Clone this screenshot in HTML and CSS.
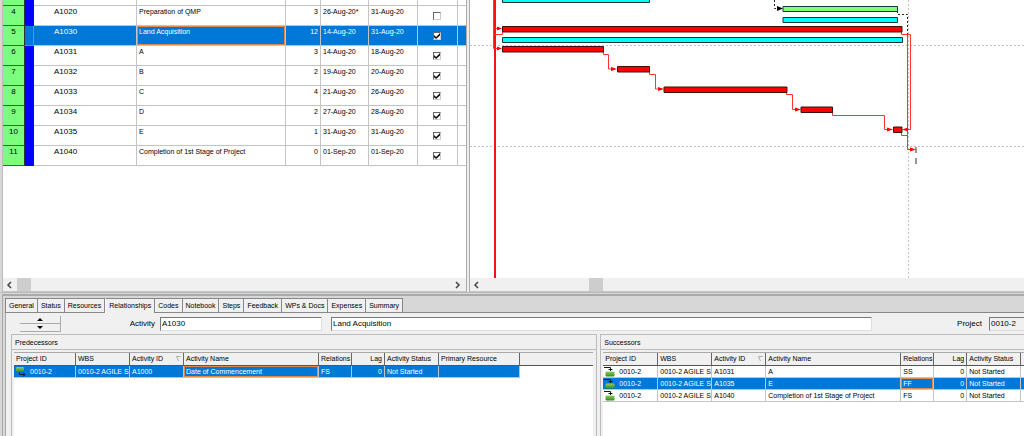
FILE: index.html
```html
<!DOCTYPE html>
<html lang="en">
<head>
<meta charset="utf-8">
<title>Activities</title>
<link rel="stylesheet" href="styles.css">
</head>
<body>
<svg width="0" height="0" class="defs" aria-hidden="true">
  <defs>
    <linearGradient id="leaf" x1="0" y1="0" x2="0" y2="1"><stop offset="0" stop-color="#8fd060"/><stop offset="1" stop-color="#2f8a1c"/></linearGradient>
    <symbol id="pred" viewBox="0 0 11 10"><rect x="1" y="0" width="8" height="5" rx="1" fill="url(#leaf)"/><path d="M4.500 5v2.500h5M8 5.500l2 2-2 2" fill="none" stroke="#061a10"/></symbol>
    <symbol id="succ" viewBox="0 0 11 10"><rect x="1.500" y="4.500" width="9" height="5" rx="1" fill="url(#leaf)"/><path d="M0 .5h6.500V4M4.500 2.500h4" fill="none" stroke="#0c1c10"/></symbol>
    <symbol id="sort" viewBox="0 0 5 6"><path d="M4.500.5h-4l2 4.500" fill="none" stroke="#aaa"/></symbol>
    <symbol id="prev" viewBox="0 0 6 8"><path d="M5 1 2 4l3 3" fill="none" stroke="#444" stroke-width="1.500"/></symbol>
    <symbol id="next" viewBox="0 0 6 8"><path d="M1 1l3 3-3 3" fill="none" stroke="#444" stroke-width="1.500"/></symbol>
  </defs>
</svg>
<div class="app">
  <main class="top">
    <section class="grid-pane">
      <div class="grid-body">
        <table class="activities">
          <colgroup><col class="c-num"><col class="c-band"><col class="c-id"><col class="c-name"><col class="c-dur"><col class="c-start"><col class="c-finish"><col class="c-check"><col></colgroup>
          <tbody>
            <tr class="cut"><th></th><td class="band"></td><td></td><td></td><td></td><td></td><td></td><td></td><td></td></tr>
            <tr><th>4</th><td class="band"></td><td class="id">A1020</td><td>Preparation of QMP</td><td class="num">3</td><td>26-Aug-20*</td><td>31-Aug-20</td><td class="check"><input type="checkbox" aria-label="A1020"></td><td></td></tr>
            <tr class="selected"><th>5</th><td class="band"></td><td class="id">A1030</td><td class="focus">Land Acquisition</td><td class="num">12</td><td>14-Aug-20</td><td>31-Aug-20</td><td class="check"><input type="checkbox" aria-label="A1030" checked></td><td></td></tr>
            <tr><th>6</th><td class="band"></td><td class="id">A1031</td><td>A</td><td class="num">3</td><td>14-Aug-20</td><td>18-Aug-20</td><td class="check"><input type="checkbox" aria-label="A1031" checked></td><td></td></tr>
            <tr><th>7</th><td class="band"></td><td class="id">A1032</td><td>B</td><td class="num">2</td><td>19-Aug-20</td><td>20-Aug-20</td><td class="check"><input type="checkbox" aria-label="A1032" checked></td><td></td></tr>
            <tr><th>8</th><td class="band"></td><td class="id">A1033</td><td>C</td><td class="num">4</td><td>21-Aug-20</td><td>26-Aug-20</td><td class="check"><input type="checkbox" aria-label="A1033" checked></td><td></td></tr>
            <tr><th>9</th><td class="band"></td><td class="id">A1034</td><td>D</td><td class="num">2</td><td>27-Aug-20</td><td>28-Aug-20</td><td class="check"><input type="checkbox" aria-label="A1034" checked></td><td></td></tr>
            <tr><th>10</th><td class="band"></td><td class="id">A1035</td><td>E</td><td class="num">1</td><td>31-Aug-20</td><td>31-Aug-20</td><td class="check"><input type="checkbox" aria-label="A1035" checked></td><td></td></tr>
            <tr><th>11</th><td class="band"></td><td class="id">A1040</td><td>Completion of 1st Stage of Project</td><td class="num">0</td><td>01-Sep-20</td><td>01-Sep-20</td><td class="check"><input type="checkbox" aria-label="A1040" checked></td><td></td></tr>
          </tbody>
        </table>
      </div>
      <div class="scroll">
        <button class="arrow" aria-label="Scroll left"><svg width="6" height="8"><use href="#prev"/></svg></button>
        <span class="thumb"></span>
        <button class="arrow end" aria-label="Scroll right"><svg width="6" height="8"><use href="#next"/></svg></button>
      </div>
    </section>
    <div class="splitter"></div>
    <section class="gantt-pane">
      <svg class="gantt" role="img" aria-label="Gantt chart">
        <g transform="translate(-470 0)" fill="none">
          <g stroke="#c4c4c4" stroke-dasharray="2 2"><path d="M470 45.500H3000M470 146.500H3000M908.500 0V400"/></g>
          <path d="M495 0V400" stroke="#ff1010" stroke-width="2"/>
          <g stroke="#222" stroke-dasharray="2 2"><path d="M774.500 0V8.500H778M897.500 11V14.500H907.500V34"/></g>
          <path d="M777 6l6 2.500-6 2.500z" fill="#000"/>
          <g stroke="#ff3434">
            <path d="M493.500 0V48.500H499M495 28.500H499M502.500 32V34.500H495"/>
            <path d="M603.500 52V54.500H608.500V69H613M649.500 72V74.500H655.500V89H660M786.500 92V94.500H792.500V109.500H797M832.500 112V115.500H884.500V129.500H889"/>
            <path d="M901.500 32V34.500H910.500V129.500H906M901.500 132V135.500H907.500M907.500 34V149.500H912"/>
          </g>
          <path fill="#f00" d="M497 26.500l5 2-5 2zM497 46.500l5 2-5 2zM611 67l6 2-6 2zM658 87l6 2-6 2zM795 107.500l6 2-6 2zM887 127.500l6 2-6 2zM908 127.500l-6 2 6 2zM910 147.500l6 2-6 2z"/>
          <g stroke="#183838">
            <g fill="#0ff"><path d="M502.500-2.500H649.500V2.500H502.500zM502.500 37.500H902.500V42.500H502.500zM783 17.500H897.500V22.500H783z"/></g>
            <path fill="#7cff7c" d="M783 6.500H897.500V11.500H783z"/>
          </g>
          <path stroke="#401010" fill="#f00" d="M502.500 26.500H902V32H502.500zM502.500 46.500H603.500V52H502.500zM617.500 66.500H649.500V72H617.500zM664 87H787V92.500H664zM801 107H832.500V112.500H801zM893.500 127H902V132.500H893.500z"/>
          <path d="M916 147v6M916 158v6" stroke="#777" stroke-width="1.500"/>
        </g>
      </svg>
      <div class="scroll">
        <button class="arrow" aria-label="Scroll left"><svg width="6" height="8"><use href="#prev"/></svg></button>
        <span class="thumb far"></span>
      </div>
    </section>
  </main>
  <section class="details">
    <nav class="tabs" role="tablist">
      <button class="tab" role="tab">General</button><button class="tab" role="tab">Status</button><button class="tab" role="tab">Resources</button><button class="tab active" role="tab" aria-selected="true">Relationships</button><button class="tab" role="tab">Codes</button><button class="tab" role="tab">Notebook</button><button class="tab" role="tab">Steps</button><button class="tab" role="tab">Feedback</button><button class="tab" role="tab">WPs &amp; Docs</button><button class="tab" role="tab">Expenses</button><button class="tab" role="tab">Summary</button>
    </nav>
    <form class="fields">
      <div class="stepper">
        <button type="button" aria-label="Previous activity"><svg width="6" height="3"><path d="M0 3l3-3 3 3z"/></svg></button>
        <button type="button" aria-label="Next activity"><svg width="6" height="3"><path d="M0 0l3 3 3-3z"/></svg></button>
      </div>
      <label class="l-activity" for="act">Activity</label>
      <input id="act" class="f-id" type="text" value="A1030">
      <input class="f-name" type="text" aria-label="Activity name" value="Land Acquisition">
      <label class="l-project" for="proj">Project</label>
      <input id="proj" class="f-project" type="text" value="0010-2" readonly>
    </form>
    <div class="panels">
      <section class="panel pred">
        <h2>Predecessors</h2>
        <div class="list">
          <table class="links">
            <colgroup><col class="p-project"><col class="p-col"><col class="p-col"><col class="p-name"><col class="p-small"><col class="p-small"><col class="p-col"><col class="p-res"><col></colgroup>
            <thead><tr><th>Project ID</th><th>WBS</th><th><span class="sorted">Activity ID<svg width="5" height="6"><use href="#sort"/></svg></span></th><th>Activity Name</th><th>Relations</th><th class="num">Lag</th><th>Activity Status</th><th>Primary Resource</th><th></th></tr></thead>
            <tbody>
              <tr class="selected"><td><span class="icon-cell"><svg width="11" height="10"><use href="#pred"/></svg>0010-2</span></td><td>0010-2 AGILE S</td><td>A1000</td><td class="focus">Date of Commencement</td><td>FS</td><td class="num">0</td><td>Not Started</td><td></td><td class="rest"></td></tr>
            </tbody>
          </table>
        </div>
      </section>
      <section class="panel succ">
        <h2>Successors</h2>
        <div class="list">
          <table class="links">
            <colgroup><col class="s-project"><col class="p-col"><col class="p-col"><col class="p-name"><col class="p-small"><col class="p-small"><col class="p-col"><col></colgroup>
            <thead><tr><th>Project ID</th><th>WBS</th><th><span class="sorted">Activity ID<svg width="5" height="6"><use href="#sort"/></svg></span></th><th>Activity Name</th><th>Relations</th><th class="num">Lag</th><th>Activity Status</th><th></th></tr></thead>
            <tbody>
              <tr><td><span class="icon-cell"><svg width="11" height="10"><use href="#succ"/></svg>0010-2</span></td><td>0010-2 AGILE S</td><td>A1031</td><td>A</td><td>SS</td><td class="num">0</td><td>Not Started</td><td></td></tr>
              <tr class="selected"><td><span class="icon-cell"><svg width="11" height="10"><use href="#succ"/></svg>0010-2</span></td><td>0010-2 AGILE S</td><td>A1035</td><td>E</td><td class="focus">FF</td><td class="num">0</td><td>Not Started</td><td></td></tr>
              <tr><td><span class="icon-cell"><svg width="11" height="10"><use href="#succ"/></svg>0010-2</span></td><td>0010-2 AGILE S</td><td>A1040</td><td>Completion of 1st Stage of Project</td><td>FS</td><td class="num">0</td><td>Not Started</td><td></td></tr>
            </tbody>
          </table>
        </div>
      </section>
    </div>
  </section>
</div>
</body>
</html>
```
FILE: styles.css
```css
* { box-sizing: border-box; }
body {
  margin: 0;
  background: #d7d7d7;
  color: #000;
  font: 7px/10px "Liberation Sans", Arial, sans-serif;
}
button, input { font: inherit; color: inherit; margin: 0; padding: 0; border: 0; border-radius: 0; }
svg { display: block; flex: none; }
.defs { position: absolute; }
.app { display: flex; flex-direction: column; min-height: 100vh; overflow: hidden; }

/* Activity grid and chart */
.top { display: flex; padding-left: 2px; border-bottom: 1px solid #bbb; }
.grid-pane { flex: none; width: 464px; display: flex; flex-direction: column; border-left: 1px solid #bbb; background: #fff; }
.grid-body { height: 278px; }
.splitter { flex: none; width: 4px; background: #eee; border: solid #aaa; border-width: 0 1px; }
.gantt-pane { flex: 1; min-width: 0; background: #fff; }
.gantt { width: 100%; height: 278px; overflow: hidden; }

table { border-collapse: separate; border-spacing: 0; table-layout: fixed; width: 100%; }
th, td { text-align: left; font-weight: 400; white-space: nowrap; overflow: hidden; }
.activities td, .activities th { height: 20px; padding: 0 2px; vertical-align: top; line-height: 11px; border-right: 1px solid #c4c4c4; border-bottom: 1px solid #c4c4c4; }
.activities .cut td, .activities .cut th { height: 6px; }
.activities th { background: #7cff7c; text-align: center; border-right-color: #333; border-bottom-color: #555; font-size: 8px; }
.activities td:last-child { border-right: 0; }
.activities .band { background: #00f; border-color: #00f; }
.activities .id { padding-left: 20px; font-size: 8px; }
.activities .num { text-align: right; }
.activities .check { padding: 6px 0 0 15px; }
.c-num { width: 22px; } .c-band { width: 9px; } .c-id { width: 103px; } .c-name { width: 149px; }
.c-dur { width: 35px; } .c-start { width: 48px; } .c-finish { width: 49px; } .c-check { width: 40px; }

.selected td, .activities .selected .band { background: #0078d7; color: #fff; }
.activities .selected .band { border-color: #4a9ade; }
.selected .focus { box-shadow: inset 0 0 0 1px #e08a4c; }

.check input { appearance: none; display: block; width: 8px; height: 8px; background: #fff; border: 1px solid; border-color: #666 #ccc #ccc #666; }
.check input:checked::after { content: ""; display: block; width: 6px; height: 6px; background: #111; clip-path: polygon(0 35%, 35% 65%, 100% 0, 100% 40%, 35% 100%, 0 70%); }

.scroll { display: flex; align-items: center; height: 14px; background: #f0f0f0; border-bottom: 1px solid #c4c4c4; }
.arrow { width: 14px; height: 13px; padding-left: 3px; background: none; }
.arrow.end { margin-left: auto; }
.thumb { width: 14px; height: 13px; background: #cdcdcd; }
.thumb.far { margin-left: 105px; }

/* Detail tabs */
.details { flex: 1; display: flex; flex-direction: column; margin-left: 2px; padding-left: 2px; border-left: 1px solid #aaa; border-top: 2px solid #aaa; margin-top: 1px; }
.tabs { display: flex; align-items: flex-end; height: 17px; padding-top: 2px; border-bottom: 1px solid #888; }
.tab { height: 14px; padding: 0 3px; background: #f0f0f0; border: solid #888; border-width: 1px 1px 0 0; white-space: nowrap; }
.tab:first-child { border-left: 1px solid #888; }
.tab.active { height: 15px; margin-bottom: -1px; border-left: 1px solid #fff; }
.fields { display: flex; align-items: center; height: 21px; padding-left: 14px; background: #f0f0f0; border-left: 1px solid #aaa; }
.stepper { display: flex; flex-direction: column; width: 41px; height: 16px; }
.stepper button { flex: 1; display: flex; align-items: center; justify-content: center; background: #f0f0f0; border: solid #aaa; border-width: 0 1px 1px 0; }
.fields input, .fields label { font-size: 8px; }
.fields input { height: 14px; padding: 0 1px; background: #fff; border: 1px solid; border-color: #777 #ddd #ddd #777; }
.l-activity { width: 99px; padding-right: 5px; text-align: right; }
.f-id { width: 162px; }
.f-name { flex: 1; min-width: 0; margin-left: 9px; }
.l-project { width: 117px; padding-right: 7px; text-align: right; }
.fields .f-project { width: 35px; background: #f0f0f0; border-right: 0; }

/* Relationship lists */
.panels { flex: 1; display: flex; gap: 3px; padding-left: 5px; background: #f0f0f0; border-left: 1px solid #aaa; }
.panel { display: flex; flex-direction: column; min-width: 0; border: solid #bbb; border-width: 1px 0 0 1px; }
.pred { flex: 586 1 0; border-right-width: 1px; }
.succ { flex: 424 1 0; }
h2 { margin: 0; padding-left: 3px; height: 15px; font-size: 7px; font-weight: 400; line-height: 15px; border-bottom: 1px solid #bbb; }
.list { flex: 1; margin: 2px 0 0 2px; background: #fff; border-top: 1px solid #aaa; overflow: hidden; }
.pred .list { margin-right: 3px; }
.links th { height: 13px; padding: 0 2px; background: #f0f0f0; border-right: 1px solid #666; border-bottom: 1px solid #555; }
.links td { height: 12px; padding: 0 2px; border-right: 1px solid #c4c4c4; border-bottom: 1px solid #c4c4c4; }
.links .num { text-align: right; }
.links th:last-child, .links td:last-child { border-right: 0; }
.links .selected td.rest { background: #fff; border-bottom: 0; }
.sorted { display: flex; align-items: center; justify-content: space-between; }
.icon-cell { display: flex; align-items: center; gap: 4px; }
.icon-cell svg { margin-left: -1px; }
.p-project { width: 62px; } .s-project { width: 55px; } .p-col { width: 54px; } .p-name { width: 135px; }
.p-small { width: 33px; } .p-res { width: 81px; }
```
